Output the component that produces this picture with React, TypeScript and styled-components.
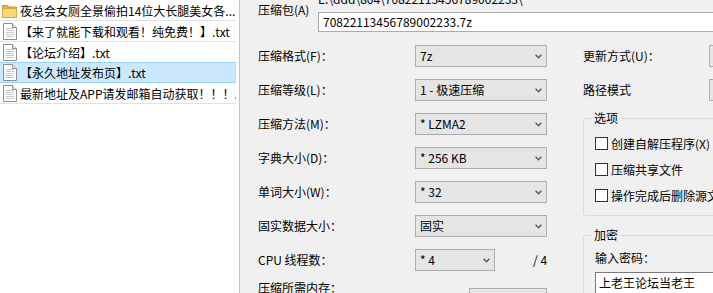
import React from "react";
import styled, { createGlobalStyle } from "styled-components";

const GlobalStyle = createGlobalStyle`
  html, body {
    margin: 0;
    padding: 0;
    background: #f0f0f0;
  }
  body {
    font-family: "Noto Sans CJK SC", "Noto Sans", sans-serif;
    font-size: 12px;
    color: #000;
  }
`;

const Screen = styled.div`
  display: flex;
  width: 713px;
  height: 293px;
  overflow: hidden;
`;

/* ---------- file list ---------- */

const FileList = styled.ul`
  list-style: none;
  margin: 0;
  padding: 0;
  width: 240px;
  flex: none;
  background: #fff;
  border-right: 1px solid #c4c4c4;
  box-sizing: border-box;
`;

const FileRow = styled.li<{ $selected?: boolean }>`
  display: flex;
  align-items: center;
  gap: 3px;
  height: 21px;
  box-sizing: border-box;
  padding-left: 2px;
  margin-right: 3px;
  background: ${(p) => (p.$selected ? "#cce8ff" : "#fff")};
  border-bottom: 1px solid ${(p) => (p.$selected ? "#99d1ff" : "#e2e2e2")};
  border-top: 1px solid ${(p) => (p.$selected ? "#99d1ff" : "transparent")};
  margin-top: ${(p) => (p.$selected ? "-1px" : "0")};
  overflow: hidden;
`;

const IconBox = styled.span`
  width: 15px;
  height: 17px;
  flex: none;
  display: flex;
  align-items: center;
  justify-content: center;
`;

const FileName = styled.span`
  line-height: 16px;
  white-space: nowrap;
  overflow: hidden;
`;

const FolderIcon = () => (
  <svg width="15" height="14" viewBox="0 0 15 14">
    <path d="M0.5 1.5 H5.5 L7 3 H14.5 V13.5 H0.5 Z" fill="#e0b44a" stroke="#c9992e" />
    <path d="M0.5 4.5 H14.5 V13.5 H0.5 Z" fill="#f8d775" stroke="#d6a83b" />
  </svg>
);

const DocIcon = () => (
  <svg width="14" height="17" viewBox="0 0 14 17">
    <path d="M0.5 0.5 H9.5 L13.5 4.5 V16.5 H0.5 Z" fill="#fff" stroke="#8f8f8f" />
    <path d="M9.5 0.5 V4.5 H13.5" fill="#ececec" stroke="#8f8f8f" />
    {[5, 7, 9, 11, 13].map((y) => (
      <line key={y} x1="3" y1={y + 0.5} x2="11" y2={y + 0.5} stroke="#c9c9c9" />
    ))}
  </svg>
);

/* ---------- dialog ---------- */

const Dialog = styled.div`
  flex: 1;
  min-width: 0;
  background: #f0f0f0;
  padding-left: 18px;
  overflow: hidden;
`;

const ArchiveRow = styled.div`
  display: flex;
  margin-top: -9px;
`;

const ArchiveLabel = styled.div`
  width: 60px;
  flex: none;
  margin-top: 11px;
  line-height: 16px;
  white-space: nowrap;
`;

const ArchiveFields = styled.div`
  flex: 1;
  min-width: 0;
  display: flex;
  flex-direction: column;
  gap: 5px;
`;

const PathText = styled.div`
  line-height: 16px;
  white-space: nowrap;
`;

const TextInput = styled.div<{ $h?: number }>`
  height: ${(p) => p.$h ?? 20}px;
  box-sizing: border-box;
  border: 1px solid #acacac;
  background: #fff;
  padding-left: 4px;
  line-height: ${(p) => (p.$h ?? 20) - 2}px;
  white-space: nowrap;
  margin-right: -20px;
`;

const Columns = styled.div`
  display: flex;
  gap: 36px;
  margin-top: 13px;
`;

const LeftCol = styled.div`
  width: 289px;
  flex: none;
  display: flex;
  flex-direction: column;
  gap: 12px;
`;

const FieldRow = styled.div<{ $top?: boolean }>`
  display: flex;
  align-items: ${(p) => (p.$top ? "flex-start" : "center")};
  height: 22px;
`;

const FieldLabel = styled.div<{ $w?: number; $shift?: number }>`
  width: ${(p) => p.$w ?? 157}px;
  flex: none;
  line-height: 16px;
  white-space: nowrap;
  margin-top: ${(p) => p.$shift ?? 0}px;
`;

const Combo = styled.div<{ $w?: number; $shift?: number }>`
  width: ${(p) => (p.$w ? `${p.$w}px` : "auto")};
  flex: ${(p) => (p.$w ? "none" : "1")};
  height: 22px;
  box-sizing: border-box;
  border: 1px solid #acacac;
  background: #e5e5e5;
  display: flex;
  align-items: center;
  justify-content: space-between;
  padding: 0 4px;
  margin-top: ${(p) => p.$shift ?? 0}px;
  line-height: 16px;
  white-space: nowrap;
`;

const Suffix = styled.span`
  flex: none;
  margin-left: 38px;
  line-height: 16px;
  white-space: nowrap;
`;

const Chevron = () => (
  <svg width="7" height="5" viewBox="0 0 7 5">
    <path d="M0.6 0.8 L3.5 3.8 L6.4 0.8" fill="none" stroke="#5a5a5a" strokeWidth="1.4" />
  </svg>
);

const RightCol = styled.div`
  width: 220px;
  flex: none;
  display: flex;
  flex-direction: column;
`;

const RightRows = styled.div`
  display: flex;
  flex-direction: column;
  gap: 12px;
`;

const Group = styled.div<{ $gap: number }>`
  display: flex;
  flex-direction: column;
  align-items: flex-start;
  margin-top: ${(p) => p.$gap}px;
  border: 1px solid #dcdcdc;
  border-radius: 3px;
  padding: 0 0 7px 11px;
`;

const Legend = styled.div`
  margin: -9px 0 0 -4px;
  padding: 0 3px;
  background: #f0f0f0;
  line-height: 16px;
`;

const CheckRow = styled.label`
  display: flex;
  align-items: center;
  gap: 3px;
  height: 26px;
  white-space: nowrap;
  &:first-of-type {
    margin-top: 4px;
  }
`;

const CheckBox = styled.span`
  width: 13px;
  height: 13px;
  box-sizing: border-box;
  border: 1px solid #333;
  background: #fff;
  flex: none;
`;

const PlainLine = styled.div`
  line-height: 16px;
  margin-top: 7px;
  white-space: nowrap;
`;

const PasswordBox = styled(TextInput)`
  align-self: stretch;
  margin-top: 6px;
  padding-left: 3px;
  border-color: #7a7a7a;
`;

const files = [
  { name: "夜总会女厕全景偷拍14位大长腿美女各...", folder: true },
  { name: "【来了就能下载和观看！纯免费！】.txt" },
  { name: "【论坛介绍】.txt" },
  { name: "【永久地址发布页】.txt", selected: true },
  { name: "最新地址及APP请发邮箱自动获取！！！..." },
];

const fields = [
  { label: "压缩格式(F)：", value: "7z" },
  { label: "压缩等级(L)：", value: "1 - 极速压缩" },
  { label: "压缩方法(M)：", value: "* LZMA2" },
  { label: "字典大小(D)：", value: "* 256 KB" },
  { label: "单词大小(W)：", value: "* 32" },
  { label: "固实数据大小：", value: "固实" },
];

const options = ["创建自解压程序(X)", "压缩共享文件", "操作完成后删除源文件"];

export default function App() {
  return (
    <Screen>
      <GlobalStyle />
      <FileList>
        {files.map((f) => (
          <FileRow key={f.name} $selected={f.selected}>
            <IconBox>{f.folder ? <FolderIcon /> : <DocIcon />}</IconBox>
            <FileName>{f.name}</FileName>
          </FileRow>
        ))}
      </FileList>

      <Dialog>
        <ArchiveRow>
          <ArchiveLabel>压缩包(A)</ArchiveLabel>
          <ArchiveFields>
            <PathText>E:\ddd\804\70822113456789002233\</PathText>
            <TextInput>70822113456789002233.7z</TextInput>
          </ArchiveFields>
        </ArchiveRow>

        <Columns>
          <LeftCol>
            {fields.map((f) => (
              <FieldRow key={f.label}>
                <FieldLabel>{f.label}</FieldLabel>
                <Combo $w={132}>
                  <span>{f.value}</span>
                  <Chevron />
                </Combo>
              </FieldRow>
            ))}
            <FieldRow>
              <FieldLabel>CPU 线程数：</FieldLabel>
              <Combo $w={80}>
                <span>* 4</span>
                <Chevron />
              </Combo>
              <Suffix>/ 4</Suffix>
            </FieldRow>
            <FieldRow $top>
              <FieldLabel $w={211} $shift={-3}>压缩所需内存：</FieldLabel>
              <Combo $w={78} $shift={5} />
            </FieldRow>
          </LeftCol>

          <RightCol>
            <RightRows>
              <FieldRow>
                <FieldLabel $w={126}>更新方式(U)：</FieldLabel>
                <Combo />
              </FieldRow>
              <FieldRow>
                <FieldLabel $w={126}>路径模式</FieldLabel>
                <Combo />
              </FieldRow>
            </RightRows>

            <Group $gap={17}>
              <Legend>选项</Legend>
              {options.map((o) => (
                <CheckRow key={o}>
                  <CheckBox />
                  {o}
                </CheckRow>
              ))}
            </Group>

            <Group $gap={19}>
              <Legend>加密</Legend>
              <PlainLine>输入密码：</PlainLine>
              <PasswordBox $h={22}>上老王论坛当老王</PasswordBox>
            </Group>
          </RightCol>
        </Columns>
      </Dialog>
    </Screen>
  );
}
